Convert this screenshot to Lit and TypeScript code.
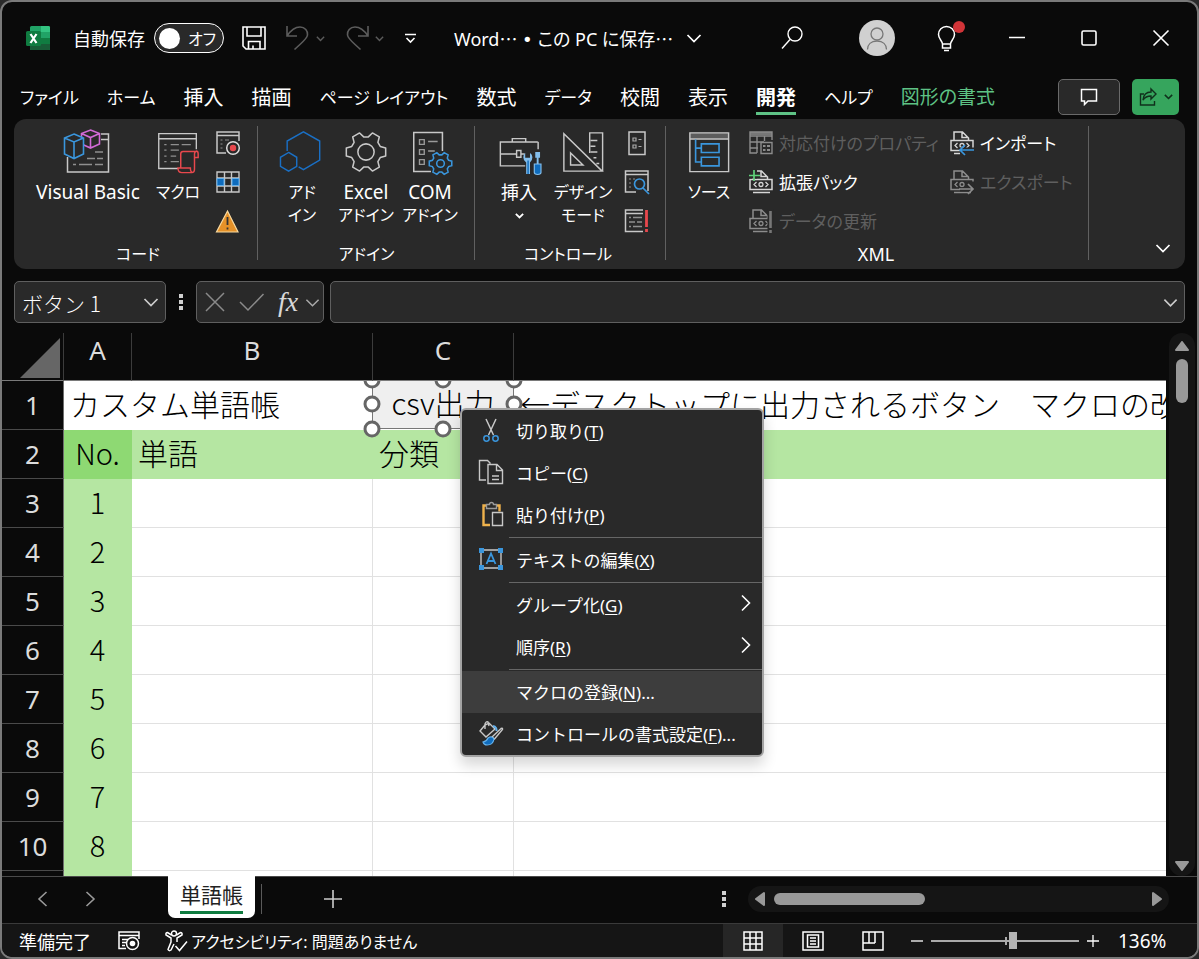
import { LitElement, html, svg, css, nothing } from "lit";
import { customElement, property, state } from "lit/decorators.js";
import { classMap } from "lit/directives/class-map.js";

/** Wraps drawing content in an svg whose viewBox starts at (x, y). */
const icon = (x: number, y: number, w: number, h: number, body: unknown) => html`
  <svg width=${w} height=${h} viewBox="${x} ${y} ${w} ${h}" fill="none" aria-hidden="true">${body}</svg>`;

const chevron = (size: number, color: string, width = 1.6) => html`
  <svg class="chev" width=${size} height=${size} viewBox="0 0 16 16" fill="none" aria-hidden="true">
    <path d="M1.5 5l6.5 6.5L14.5 5" stroke=${color} stroke-width=${(width * 16) / size} />
  </svg>`;

const G = "#c8c8c8";
const B = "#3a96dd";

/* ---------- title bar ---------- */
const logo = icon(26, 26, 24, 24, svg`
  <rect x="30" y="26" width="20" height="24" rx="1.5" fill="#21a366"/>
  <path d="M41 26h7.500a1.500 1.500 0 0 1 1.500 1.500V32h-9z" fill="#33c481"/>
  <path d="M30 32h11v6H30z" fill="#107c41"/><path d="M41 32h9v6h-9z" fill="#21a366"/>
  <path d="M30 38h20v10.500a1.500 1.500 0 0 1-1.500 1.500h-17A1.500 1.500 0 0 1 30 48.500z" fill="#185c37"/>
  <path d="M41 38h9v6h-9z" fill="#107c41"/>
  <rect x="26" y="31" width="15" height="15" rx="1.500" fill="#107c41"/>
  <path d="M30.500 34l6 9M36.500 34l-6 9" stroke="#fff" stroke-width="2.200"/>`);
const save = icon(242, 26, 24, 24, svg`
  <path d="M243 27h22v22h-19l-3-3zM247 27v9h14v-9M248.500 49v-7.500h11.500V49M253 49v-3.500" stroke="#fff" stroke-width="1.600"/>`);
const undo = icon(286, 26, 24, 24, svg`
  <path d="M287 26v10h10M287 36c4-6 8-9 13-9 5 0 8 4 7.500 8-.5 4-5 7-13 14.500" stroke="#5c5c5c" stroke-width="1.600"/>`);
const redo = icon(342, 26, 24, 24, svg`
  <path d="M365 26v10h-10M365 36c-4-6-8-9-13-9-5 0-8 4-7.500 8 .5 4 5 7 13 14.500" stroke="#5c5c5c" stroke-width="1.600"/>`);
const customize = icon(405, 32, 13, 13, svg`
  <path d="M406 34.500h11M407.500 38l4 4 4-4" stroke="#fff" stroke-width="1.600"/>`);
const search = icon(780, 26, 24, 24, svg`
  <circle cx="795" cy="34" r="7" stroke="#fff" stroke-width="1.400"/><path d="M790 39.500l-8 9" stroke="#fff" stroke-width="1.400"/>`);
const person = icon(865, 26, 24, 24, svg`
  <circle cx="877" cy="34" r="6" stroke="#777" stroke-width="1.300"/><path d="M867.500 49.500c0-5 3.500-8.500 9.500-8.500s9.500 3.500 9.500 8.500" stroke="#777" stroke-width="1.300"/>`);
const bulb = icon(934, 20, 32, 34, svg`
  <path d="M942.500 43c0-3-4-5-4-9.500a8 8 0 0 1 16 0c0 4.500-4 6.500-4 9.500zM942.500 43v4h8v-4M944 49.500h5" stroke="#fff" stroke-width="1.500"/>
  <circle cx="959" cy="26" r="6" fill="#d13438"/>`);

/* ---------- ribbon, large ---------- */
const vb = icon(64, 130, 46, 44, svg`
  <path d="M100 134h7.500v38H66.500v-15M100 139.500h7.500" stroke=${G} stroke-width="1.500"/>
  <path d="M94 152h8M86 158.500h8M96 158.500h6M72 164.500h3M78 164.500h13M94 164.500h8" stroke="#8f8f8f" stroke-width="1.500"/>
  <path d="M89.500 130l9 3.500v10.500l-9 4-9-4V133.500zM80.500 133.500l9 4 9-4M89.500 137.500V148" stroke="#d169d6" stroke-width="1.600"/>
  <path d="M73 134l9.500 4v16L73 158.500l-9.500-4.500v-16zM63.500 138l9.500 4 9.500-4M73 142v16.500" fill="#292929" stroke=${B} stroke-width="1.600"/>`);
const macro = icon(153, 130, 48, 48, svg`
  <path d="M197 151v-17h-41v38h21M156 139.500h41" stroke=${G} stroke-width="1.500"/>
  <path d="M162 146h2.500M169 146h9M181 146h10M162 152h2.500M169 152h9M162 158.500h2.500M169 158.500h6M162 164.500h2.500M169 164.500h9" stroke="#8f8f8f" stroke-width="1.500"/>
  <path d="M180 171v-15q0-2.500 2.500-2.500h14.500v0q-2 0-2 3v16q0 4-3 4h-11q-4 0-4-5h13.500q0 5 3 5M195 160h4v-4q0-3-2.500-3" stroke="#e8484d" stroke-width="1.600"/>`);
const hexes = icon(280, 130, 46, 46, svg`
  <path d="M287.500 152v-10.500l17-9.500 17 9.500v20l-17 10-5-3" stroke="#1a6fc4" stroke-width="1.500"/>
  <path d="M289 153.500l8.500 5v9.500l-8.500 5-8.500-5v-9.500z" stroke="#1a6fc4" stroke-width="1.500"/>`);

const gearPath = (cx: number, cy: number, r: number) => {
  const pts: string[] = [];
  for (let i = 0; i < 6; i++) {
    const a = (i * 60 * Math.PI) / 180;
    for (const [d, k] of [[-0.37, 0.76], [-0.2, 1], [0.2, 1], [0.37, 0.76]]) {
      pts.push(`${(cx + Math.cos(a + d) * r * k).toFixed(2)} ${(cy + Math.sin(a + d) * r * k).toFixed(2)}`);
    }
  }
  return `M${pts.join("L")}Z`;
};
const gear = icon(343, 130, 46, 46, svg`
  <path d=${gearPath(366, 153, 21)} stroke=${G} stroke-width="1.600" stroke-linejoin="round"/>
  <circle cx="366" cy="153" r="8.500" stroke=${G} stroke-width="1.600"/>`);
const comGear = icon(409, 130, 46, 46, svg`
  <path d="M445 152v-19.500h-30v41h18" stroke=${G} stroke-width="1.600"/>
  <path d="M421 140h5v5h-5zM421 150.500h5v5h-5zM421 161h5v5h-5zM430 142h10M430 152h7" stroke="#9a9a9a" stroke-width="1.400"/>
  <path d=${gearPath(443, 165, 12)} fill="#292929" stroke=${B} stroke-width="1.600"/>
  <circle cx="443" cy="165" r="4" stroke=${B} stroke-width="1.600"/>`);
const toolbox = icon(494, 130, 46, 46, svg`
  <path d="M537 150v-7q0-0-1-.5h-38.500v25h26M510 142v-3h14v3M497 155h17M519 155h4M514.500 151.500h4.500v7h-4.500z" stroke=${G} stroke-width="1.500"/>
  <path d="M524.500 176v-12q-3-2-3-5.500 0-3 2-4.500v5h5v-5q2.500 1.500 2.500 4.500 0 3.500-2.500 5.500v12z" fill="#83beec"/>
  <path d="M526.500 176v-14" stroke="#0f6cbd" stroke-width="1.500"/>
  <path d="M534 153h5v6h-1.500v7h-2v-7H534z" fill="#83beec"/><path d="M533 165.500h7v9q0 2-3.500 2t-3.500-2z" fill="#0f6cbd" stroke="#83beec" stroke-width="1.200"/>`);
const design = icon(559, 130, 46, 46, svg`
  <path d="M562 134v39h40zM569 154v12.500h13zM589 154v-21h13.500v40M590 141h7M590 147h5M590 153h7M593 159h3M596 165h3" stroke=${G} stroke-width="1.500"/>`);
const source = icon(685, 130, 46, 46, svg`
  <path d="M688 133h40v6h-40z" fill="#5c5c5c"/>
  <path d="M688 133h40.500v40.500H688zM688 139.500h40" stroke=${G} stroke-width="1.500"/>
  <path d="M694 140v23.500h6M694 149h6M700 144.500h18.500v9H700zM700 158.500h18.500v9H700z" stroke=${B} stroke-width="1.700"/>`);

/* ---------- ribbon, small ---------- */
const record = icon(216, 131, 24, 24, svg`
  <path d="M226 153h-9v-21h22v9M217 135.500h22" stroke=${G} stroke-width="1.500"/><path d="M220.500 140h2M225 140h4M220.500 144h2M220.500 148h2" stroke="#8f8f8f"/>
  <circle cx="233" cy="148" r="6.300" stroke="#ddd" stroke-width="1.500"/><circle cx="233" cy="148" r="3.200" fill="#e8484d"/>`);
const relative = icon(216, 170, 24, 24, svg`
  <path d="M217 172h22v20h-22zM217 178h22M217 186h22M224.500 172v20M231.500 172v20" stroke=${G} stroke-width="1.400"/>
  <path d="M217 178.500h7v7h-7zM232 178.500h7v7h-7z" fill="#0f6cbd" stroke="#64b1ec"/>`);
const warning = icon(216, 209, 24, 24, svg`
  <path d="M227.500 211l10.500 21h-21.500z" fill="#e59128" stroke="#f7d9a0" stroke-width="1.200"/><path d="M227.500 217v8M227.500 227.500v2" stroke="#333" stroke-width="1.800"/>`);
const props = icon(623, 131, 24, 24, svg`
  <path d="M627 132h16v22.500h-16z" stroke=${G} stroke-width="1.500"/><path d="M631 138h3v3h-3zM631 145h3v3h-3zM636.500 139.500h3M636.500 146.500h3" stroke="#aaa" stroke-width="1.200"/>`);
const viewCode = icon(623, 170, 24, 24, svg`
  <path d="M634 192h-10.500v-21h22.500v20M624 174.500h22" stroke=${G} stroke-width="1.500"/><path d="M627 179h2M631 179h2M627 183h2M627 187h2" stroke="#8f8f8f"/>
  <circle cx="637.500" cy="184" r="5" stroke=${B} stroke-width="1.700"/><path d="M641 188l6 6" stroke=${B} stroke-width="1.700"/>`);
const runDialog = icon(623, 209, 24, 24, svg`
  <path d="M641 210h-17.500v21.500h17.500M624 213.500h17" stroke=${G} stroke-width="1.500"/><path d="M627 217.500h2M631 217.500h9M627 222h6M635 222h5M627 226.500h2M631 226.500h9" stroke="#8f8f8f" stroke-width="1.300"/>
  <path d="M644.500 210v17M644.500 229v3" stroke="#e8484d" stroke-width="2.800"/>`);
const mapProps = icon(748, 131, 24, 24, svg`
  <path d="M749 132h22v3h-22z" fill="#777"/><path d="M756 153h-7v-21h22v8M749 136h22M749 142h14M749 148h8M756 136v17M763.500 136v5" stroke="#8c8c8c" stroke-width="1.400"/>
  <path d="M760 142.500h11v11h-11z" stroke="#8c8c8c" stroke-width="1.400"/><path d="M762 146h2.500M766 146h3M762 150h2.500M766 150h3" stroke="#8c8c8c" stroke-width="2"/>`);
const xmlDoc = (c: string) => svg`
  <path d="M4 9.500V1h8.500l6 6v2.500M12 1v5.500h6M1 9.500h22v10H1zM4 22.500h17" stroke=${c} stroke-width="1.500"/>
  <path d="M7.500 12L5 14.500 7.500 17M16.500 12l2.500 2.500-2.500 2.500" stroke=${c} stroke-width="1.300"/><circle cx="12" cy="14.500" r="2" stroke=${c} stroke-width="1.300"/>`;
const expansion = icon(0, 0, 24, 24, svg`${xmlDoc("#d6d6d6")}<path d="M-1 -1h9v9.500h-9z" fill="#292929"/><path d="M5 0v11M0 5.500h11" stroke="#5fd17a" stroke-width="1.700"/>`);
const refresh = icon(0, 0, 24, 24, svg`${xmlDoc("#8c8c8c")}<path d="M18.500 0h6v24h-6z" fill="#292929"/><path d="M21.500 2v17M21.500 21v3" stroke="#777" stroke-width="2.600"/>`);
const importIcon = icon(0, 0, 24, 24, svg`${xmlDoc("#d6d6d6")}<path d="M10 16.500h15v8H10z" fill="#292929"/><path d="M24 19H10.500M15 14l-5 5 5 5" stroke=${B} stroke-width="1.700"/>`);
const exportIcon = icon(0, 0, 24, 24, svg`${xmlDoc("#8c8c8c")}<path d="M15 11.500h9.500v10H10v-4h5z" fill="#292929"/><path d="M9 19h14M18 14l5 5-5 5" stroke="#8c8c8c" stroke-width="1.700"/>`);

/* ---------- context menu ---------- */
const cut = icon(479, 418, 24, 24, svg`
  <path d="M486 419l7.500 16M496 419l-7.500 16" stroke=${G} stroke-width="1.500"/>
  <circle cx="486.500" cy="438.500" r="2.700" stroke=${B} stroke-width="1.500"/><circle cx="495.500" cy="438.500" r="2.700" stroke=${B} stroke-width="1.500"/>`);
const copy = icon(479, 460, 24, 24, svg`
  <path d="M486 480h-6.500v-19.500h8l3 3M488 464.500h9l5.500 5.500v13.500H488zM496.500 465v5.500h6M492 476h7M492 479.500h7" stroke=${G} stroke-width="1.400"/>`);
const paste = icon(479, 502, 24, 24, svg`
  <path d="M490 525h-6.500v-19.500h16v6" stroke="#efb24c" stroke-width="2.400"/>
  <path d="M486.500 508.500v-4h3q0-2 2-2t2 2h3v4z" fill="#292929" stroke="#9a9a9a" stroke-width="1.400"/><path d="M492.500 512.500h10v13h-10z" fill="#292929" stroke=${G} stroke-width="1.400"/>`);
const editText = icon(479, 547, 24, 24, svg`
  <path d="M481 550h20v18h-20z" stroke=${G} stroke-width="1.400"/><path d="M479 548h5v5h-5zM498 548h5v5h-5zM479 565h5v5h-5zM498 565h5v5h-5z" fill=${B}/>
  <path d="M486.500 564l4.500-10.500 4.500 10.500M488 561h6" stroke=${B} stroke-width="1.800"/>`);
const format = icon(479, 721, 24, 24, svg`
  <path d="M485 725l-5 6 6 6 9-8-6-6zM485 729v-5q1-3 3-2l1 4" stroke=${G} stroke-width="1.400"/>
  <path d="M493 726q4 1 3.500 5" stroke="#64b1ec" stroke-width="2"/>
  <path d="M492 737l9-8.500q2-1 1.500 1l-8 9.500z" stroke=${G} stroke-width="1.400" fill="#292929"/>
  <path d="M483 742q4-1 5-4 4-2.500 6 1-1 6-7 6-3 0-4-3z" fill="#0f6cbd" stroke="#64b1ec" stroke-width="1.200"/>`);

type SmallCommand = { label: string; icon: unknown; disabled?: boolean };

const TABS = [
  ["ファイル", "kana"], ["ホーム", "kana"], ["挿入", ""], ["描画", ""], ["ページ レイアウト", "kana"], ["数式", ""],
  ["データ", "kana"], ["校閲", ""], ["表示", ""], ["開発", "active"], ["ヘルプ", "kana"], ["図形の書式", "context"],
];

@customElement("xl-titlebar")
class XlTitlebar extends LitElement {
  @state() private autosave = false;
  static styles = css`
    :host { display: flex; align-items: center; height: 72px; padding-left: 24px; color: #fff; font-size: 18px; }
    * { box-sizing: border-box; }
    svg { display: block; flex: none; overflow: visible; }
    button { appearance: none; border: 0; padding: 0; background: none; color: inherit; font: inherit; display: flex; align-items: center; justify-content: center; flex: none; }
    .caption { margin-left: 23px; font-size: 18px; white-space: nowrap; }
    .switch { position: relative; display: flex; align-items: center; gap: 8px; height: 30px; width: 70px; margin-left: 9px; padding-left: 4px; border: 1px solid #fff; border-radius: 15px; background: #292929; font-size: 16px; flex: none; }
    .switch input { position: absolute; inset: 0; opacity: 0; margin: 0; }
    .knob { width: 21px; height: 21px; border-radius: 50%; background: #fff; }
    .save { margin-left: 18px; }
    .undo { margin-left: 20px; gap: 6px; }
    .customize { margin-left: 20px; }
    .doc { margin-left: 37px; gap: 13px; white-space: nowrap; }
    .cjk { font-family: "Noto Sans CJK JP", sans-serif; }
    .bullet { font-family: "DejaVu Sans", sans-serif; }
    .right { margin-left: auto; display: flex; align-items: center; }
    .avatar { width: 36px; height: 36px; margin: 0 39px 0 55px; border-radius: 50%; background: #d0d0d0; }
    .win { width: 72px; height: 48px; }
    .tips { margin-right: 15px; }
  `;
  render() {
    return html`
      ${logo}
      <span class="caption" id="autosave">自動保存</span>
      <label class="switch">
        <input type="checkbox" role="switch" aria-labelledby="autosave" .checked=${this.autosave}
          @change=${() => (this.autosave = !this.autosave)} />
        <span class="knob"></span><span>${this.autosave ? "オン" : "オフ"}</span>
      </label>
      <button class="save" aria-label="上書き保存">${save}</button>
      <button class="undo" aria-label="元に戻す">${undo}${chevron(9, "#5c5c5c", 1.4)}</button>
      <button class="undo" aria-label="やり直し">${redo}${chevron(9, "#5c5c5c", 1.4)}</button>
      <button class="customize" aria-label="クイック アクセス ツール バーのユーザー設定">${customize}</button>
      <button class="doc"><span>Word<span class="cjk">…</span> <span class="bullet">•</span> この PC に保存<span class="cjk">…</span></span>${chevron(16, "#fff", 1.7)}</button>
      <div class="right">
        <button aria-label="検索">${search}</button>
        <button class="avatar" aria-label="アカウント">${person}</button>
        <button class="tips" aria-label="ヒント">${bulb}</button>
        <button class="win" aria-label="最小化">${icon(0, 0, 16, 16, svg`<path d="M0 7.500h16" stroke="#fff" stroke-width="1.500"/>`)}</button>
        <button class="win" aria-label="最大化">${icon(0, 0, 16, 16, svg`<rect x="1" y="1" width="14" height="14" rx="1.500" stroke="#fff" stroke-width="1.600"/>`)}</button>
        <button class="win" aria-label="閉じる">${icon(0, 0, 16, 16, svg`<path d="M.5.500l15 15M15.500.500l-15 15" stroke="#fff" stroke-width="1.600"/>`)}</button>
      </div>`;
  }
}

@customElement("xl-ribbon")
class XlRibbon extends LitElement {
  static styles = css`
    :host { display: block; color: #fff; font-size: 18px; }
    * { box-sizing: border-box; }
    svg { display: block; flex: none; overflow: visible; }
    button { appearance: none; border: 0; padding: 0; margin: 0; background: none; color: inherit; font: inherit; }
    .tabs { display: flex; align-items: center; gap: 28px; height: 45px; padding: 0 18px; }
    .tab { position: relative; height: 36px; padding-bottom: 1px; font-size: 20px; white-space: nowrap; }
    .tab.kana { font-size: 17px; }
    .tab.active { font-weight: 700; border-bottom: 3px solid #5ec285; border-top: 3px solid transparent; }
    .tab.context { color: #5ec285; font-size: 19px; }
    .end { display: flex; gap: 12px; margin-left: auto; }
    .comment, .share { display: flex; align-items: center; justify-content: center; height: 36px; border-radius: 5px; }
    .comment { width: 62px; border: 1px solid #6a6a6a; background: #292929; }
    .share { width: 47px; gap: 7px; background: #36a55d; }
    .ribbon { display: flex; height: 150px; margin: 0 12px; padding-top: 4px; border-radius: 12px; background: #292929; }
    .group { position: relative; display: flex; flex-direction: column; margin: 0; flex: none; }
    .group::after { content: ""; position: absolute; right: 0; top: 3px; bottom: 9px; width: 1px; background: #606060; }
    .code { padding: 0 18px 0 22px; }
    .code .row { gap: 14px; }
    .addin { padding: 0 12px; }
    .addin .row { padding-right: 1px; }
    .control { padding: 0 17px 0 12px; }
    .control .small { margin-left: 10px; }
    .xml { padding: 0 24px 0 11px; }
    .row { display: flex; height: 117px; }
    .name { height: 29px; line-height: 28px; text-align: center; font-size: 16px; }
    .xml .name { font-size: 18px; padding-left: 10px; }
    .large { display: flex; flex-direction: column; align-items: center; width: 64px; padding-top: 7px; line-height: 23px; font-size: 18px; white-space: nowrap; }
    .large svg:first-child { height: 44px; margin-bottom: 7px; }
    .large .kana { font-size: 16px; }
    .large .latin { font-size: 19px; }
    .large .chev { margin-top: 7px; }
    .wide { width: 104px; }
    .mid { width: 48px; }
    .small { display: grid; grid-template-rows: repeat(3, 39px); align-items: center; }
    .small button { height: 24px; }
    .xmlgrid { display: grid; grid-template-columns: 201px 115px; grid-template-rows: repeat(3, 39px); align-items: center; margin-left: 8px; }
    .cmd { display: flex; align-items: center; gap: 6px; font-size: 17px; white-space: nowrap; }
    .cmd:disabled { color: #5f5f5f; }
    .collapse { margin: auto 14px 13px auto; }
  `;
  private cmd(c: SmallCommand) {
    return html`<button class="cmd" ?disabled=${c.disabled}>${c.icon}<span>${c.label}</span></button>`;
  }
  render() {
    return html`
      <nav class="tabs">
        ${TABS.map(([label, kind]) => html`<button class="tab ${kind}">${label}</button>`)}
        <div class="end">
          <button class="comment" aria-label="コメント">${icon(0, 0, 18, 18, svg`<path d="M1.500 1.500h15v11.500H8l-3.500 3.500V13h-3z" stroke="#fff" stroke-width="1.500"/>`)}</button>
          <button class="share" aria-label="共有">
            ${icon(0, 0, 18, 18, svg`<path d="M5 6H1.500v11h14v-4M12 1l5 5-5 5V8c-4 0-6 1-8 4 .5-5 3-8 8-8z" stroke="#10301c" stroke-width="1.400"/>`)}
            ${chevron(9, "#10301c", 1.6)}
          </button>
        </div>
      </nav>
      <div class="ribbon">
        <section class="group code">
          <div class="row">
            <button class="large wide">${vb}<span class="latin">Visual Basic</span></button>
            <button class="large mid">${macro}<span class="kana">マクロ</span></button>
            <div class="small">
              <button aria-label="マクロの記録">${record}</button>
              <button aria-label="相対参照で記録">${relative}</button>
              <button aria-label="マクロのセキュリティ">${warning}</button>
            </div>
          </div>
          <div class="name">コード</div>
        </section>
        <section class="group addin">
          <div class="row">
            <button class="large">${hexes}<span class="kana">アド</span><span class="kana">イン</span></button>
            <button class="large">${gear}<span class="latin">Excel</span><span class="kana">アドイン</span></button>
            <button class="large">${comGear}<span class="latin">COM</span><span class="kana">アドイン</span></button>
          </div>
          <div class="name">アドイン</div>
        </section>
        <section class="group control">
          <div class="row">
            <button class="large">${toolbox}<span>挿入</span>${chevron(9, "#fff", 1.8)}</button>
            <button class="large">${design}<span class="kana">デザイン</span><span class="kana">モード</span></button>
            <div class="small">
              <button aria-label="プロパティ">${props}</button>
              <button aria-label="コードの表示">${viewCode}</button>
              <button aria-label="ダイアログの実行">${runDialog}</button>
            </div>
          </div>
          <div class="name">コントロール</div>
        </section>
        <section class="group xml">
          <div class="row">
            <button class="large">${source}<span class="kana">ソース</span></button>
            <div class="xmlgrid">
              ${this.cmd({ label: "対応付けのプロパティ", icon: mapProps, disabled: true })}
              ${this.cmd({ label: "インポート", icon: importIcon })}
              ${this.cmd({ label: "拡張パック", icon: expansion })}
              ${this.cmd({ label: "エクスポート", icon: exportIcon, disabled: true })}
              ${this.cmd({ label: "データの更新", icon: refresh, disabled: true })}
            </div>
          </div>
          <div class="name">XML</div>
        </section>
        <button class="collapse" aria-label="リボンの表示オプション">${chevron(16, "#fff", 1.7)}</button>
      </div>`;
  }
}

@customElement("xl-formula-bar")
class XlFormulaBar extends LitElement {
  static styles = css`
    :host { display: flex; height: 42px; margin: 12px 12px 10px; color: #e6e6e6; }
    * { box-sizing: border-box; }
    svg { display: block; flex: none; overflow: visible; }
    button { appearance: none; border: 0; padding: 0; background: none; color: inherit; }
    .box { display: flex; align-items: center; border: 1px solid #5f5f5f; border-radius: 5px; background: #292929; }
    input { min-width: 0; flex: 1; border: 0; outline: 0; background: none; color: #fff; font: 300 21px "Noto Sans CJK JP", sans-serif; font-feature-settings: normal; padding: 2px 0 0 7px; }
    .name { width: 152px; padding-right: 6px; }
    .dots { width: 30px; display: flex; justify-content: center; align-items: center; }
    .fx { width: 128px; padding: 0 2px 0 9px; gap: 16px; }
    .fn { display: flex; align-items: center; gap: 7px; margin-left: -2px; font: italic 400 28px/32px "Liberation Serif", serif; color: #d8d8d8; }
    .text { flex: 1; margin-left: 6px; padding-right: 6px; }
  `;
  render() {
    return html`
      <div class="box name"><input aria-label="名前ボックス" .value=${"ボタン 1"} /><button aria-label="名前の一覧">${chevron(16, "#ccc", 1.7)}</button></div>
      <div class="dots">${icon(0, 0, 4, 16, svg`<path d="M0 0h4v4H0zM0 6h4v4H0zM0 12h4v4H0z" fill="#d0d0d0"/>`)}</div>
      <div class="box fx">
        <button aria-label="キャンセル">${icon(0, 0, 18, 18, svg`<path d="M0 0l18 18M18 0L0 18" stroke="#8a8a8a" stroke-width="1.500"/>`)}</button>
        <button aria-label="入力">${icon(0, 0, 24, 18, svg`<path d="M0 9l8 8L23.500 1" stroke="#8a8a8a" stroke-width="1.500"/>`)}</button>
        <button class="fn" aria-label="関数の挿入"><span>fx</span>${chevron(15, "#aaa", 1.5)}</button>
      </div>
      <div class="box text"><input aria-label="数式バー" /><button aria-label="数式バーの展開">${chevron(15, "#ccc", 1.6)}</button></div>`;
  }
}

type MenuEntry = "-" | { text: string; key: string; tail?: string; icon?: unknown; sub?: boolean; hover?: boolean };

@customElement("xl-context-menu")
class XlContextMenu extends LitElement {
  @property({ attribute: false }) entries: MenuEntry[] = [
    { text: "切り取り", key: "T", icon: cut },
    { text: "コピー", key: "C", icon: copy },
    { text: "貼り付け", key: "P", icon: paste },
    "-",
    { text: "テキストの編集", key: "X", icon: editText },
    "-",
    { text: "グループ化", key: "G", sub: true },
    { text: "順序", key: "R", sub: true },
    "-",
    { text: "マクロの登録", key: "N", tail: "...", hover: true },
    { text: "コントロールの書式設定", key: "F", tail: "...", icon: format },
  ];
  static styles = css`
    :host { display: block; }
    * { box-sizing: border-box; }
    .menu { width: 304px; border: 2px solid #a3a3a3; border-radius: 6px; background: #292929; overflow: hidden; box-shadow: 0 8px 14px rgba(0, 0, 0, 0.16); }
    button { appearance: none; border: 0; margin: 0; background: none; color: #fff; font: inherit; font-size: 17px; display: flex; align-items: center; width: 100%; height: 42px; padding: 0 11px 2px 17px; text-align: left; white-space: nowrap; }
    .hover { background: #3d3d3d; }
    .ico { width: 24px; height: 24px; margin-right: 13px; flex: none; }
    .label { flex: 1; }
    svg { display: block; overflow: visible; }
    hr { height: 1px; margin: 1px 0 1px 47px; border: 0; background: #666; }
    u { text-underline-offset: 2px; text-decoration-thickness: 1px; }
  `;
  render() {
    return html`<div class="menu" role="menu">
      ${this.entries.map((e) => e === "-" ? html`<hr />` : html`
        <button role="menuitem" class=${classMap({ hover: !!e.hover })}>
          <span class="ico">${e.icon ?? nothing}</span>
          <span class="label">${e.text}(<u>${e.key}</u>)${e.tail ?? ""}</span>
          ${e.sub ? icon(0, 0, 10, 20, svg`<path d="M1 1.500l7.500 7.500L1 16.500" stroke="#fff" stroke-width="1.600"/>`) : nothing}
        </button>`)}
    </div>`;
  }
}

@customElement("xl-sheet")
class XlSheet extends LitElement {
  private rows = Array.from({ length: 9 }, (_, i) => i + 3);
  static styles = css`
    :host { display: flex; flex: 1; min-height: 0; }
    * { box-sizing: border-box; }
    .view { position: relative; flex: 1; min-width: 0; background: #fff; }
    .clip { height: 100%; overflow: hidden; }
    table { width: 100%; table-layout: fixed; border-collapse: separate; border-spacing: 0; color: #000; }
    .c0 { width: 62px; } .ca { width: 68px; } .cb { width: 241px; } .cc { width: 141px; }
    th, td { padding: 0; height: 49px; white-space: nowrap; vertical-align: top; }
    th { background: #0a0a0a; color: #dcdcdc; font: 400 26px/48px "Noto Sans", sans-serif; }
    thead th { height: 48px; border-bottom: 1px solid #7a7a7a; border-right: 1px solid #3c3c3c; line-height: 34px; }
    thead th:last-child { border-right: 0; }
    thead th svg { display: block; margin: 5px 0 0 18px; }
    tbody th { border-bottom: 1px solid #4a4a4a; border-right: 1px solid #6e6e6e; }
    td { border-right: 1px solid #e1e1e1; border-bottom: 1px solid #e1e1e1; padding-left: 6px; font: 300 30px/44px "Noto Sans CJK JP", sans-serif; }
    td:last-child { border-right: 0; }
    .first td { border-color: #fff; }
    .first td:last-child { overflow: hidden; }
    .head td { background: #b5e6a2; border-color: #b5e6a2; }
    .head td.no { background: #8ed973; border-color: #8ed973; }
    td.no { background: #b5e6a2; border-color: #b5e6a2; text-align: center; padding: 0; font-size: 29px; }
    .objects { position: absolute; inset: 48px 0 0 0; overflow: hidden; pointer-events: none; }
    .control { position: absolute; left: 370px; top: -1px; width: 142px; height: 49px; padding: 0 0 5px; border: 1px solid #777; border-top: 0; background: #efefef; color: #000; font: 300 30px "Noto Sans CJK JP", sans-serif; }
    .handles { position: absolute; left: 359px; top: -13px; }
    xl-context-menu { position: absolute; left: 458px; top: 75px; }
    .vscroll { display: flex; flex-direction: column; align-items: center; width: 26px; margin: 0 2px 0 3px; padding: 8px 0 5px; border-radius: 13px; background: #151515; }
    .thumb { width: 12px; height: 44px; margin-top: 8px; border-radius: 6px; background: #999; }
    .vscroll svg:last-child { margin-top: auto; }
  `;
  render() {
    const pts = [[371, 0], [442, 0], [513, 0], [371, 24], [513, 24], [371, 49], [442, 49], [513, 49]];
    return html`
      <div class="view">
        <div class="clip">
          <table>
            <colgroup><col class="c0" /><col class="ca" /><col class="cb" /><col class="cc" /><col /></colgroup>
            <thead>
              <tr>
                <th>${icon(0, 0, 40, 40, svg`<path d="M40 0v40H0z" fill="#666"/>`)}</th>
                <th>A</th><th>B</th><th>C</th><th></th>
              </tr>
            </thead>
            <tbody>
              <tr class="first"><th>1</th><td colspan="2">カスタム単語帳</td><td></td><td>←デスクトップに出力されるボタン　マクロの改</td></tr>
              <tr class="head"><th>2</th><td class="no">No.</td><td>単語</td><td>分類</td><td></td></tr>
              ${this.rows.map((n) => html`<tr><th>${n < 11 ? n : ""}</th><td class="no">${n < 11 ? n - 2 : ""}</td><td></td><td></td><td></td></tr>`)}
            </tbody>
          </table>
        </div>
        <div class="objects">
          <button class="control">csv出力</button>
          <svg class="handles" width="164" height="74" viewBox="360 -12 164 74" aria-hidden="true">
            ${pts.map(([x, y]) => svg`<circle cx=${x} cy=${y} r="7" fill="#fff" stroke="#666" stroke-width="3"/>`)}
          </svg>
        </div>
        <xl-context-menu></xl-context-menu>
      </div>
      <div class="vscroll">
        ${icon(0, 0, 14, 10, svg`<path d="M7 1l6 8H1z" fill="#999" stroke="#999" stroke-width="2" stroke-linejoin="round"/>`)}
        <div class="thumb"></div>
        ${icon(0, 0, 14, 10, svg`<path d="M7 9l6-8H1z" fill="#999" stroke="#999" stroke-width="2" stroke-linejoin="round"/>`)}
      </div>`;
  }
}

@customElement("xl-footer")
class XlFooter extends LitElement {
  static styles = css`
    :host { display: block; color: #fff; font-size: 18px; }
    * { box-sizing: border-box; }
    svg { display: block; flex: none; overflow: visible; }
    button { appearance: none; border: 0; padding: 0; background: none; color: inherit; font: inherit; display: flex; align-items: center; justify-content: center; flex: none; }
    .sheets { display: flex; align-items: center; height: 48px; padding-bottom: 2px; border-top: 1px solid #4a4a4a; border-bottom: 1px solid #3a3a3a; }
    .nav { width: 48px; height: 44px; }
    .nav:first-child { margin-left: 16px; }
    .sheet { position: relative; align-self: flex-start; height: 42px; margin: -1px 6px 0 54px; padding: 0 12px; border-radius: 0 0 7px 7px; background: #fff; color: #222; font: 400 21px/29px "Noto Sans CJK JP", sans-serif; }
    .sheet span { display: block; height: 34px; border-bottom: 3px solid #107c41; }
    .line { width: 1px; height: 30px; background: #5a5a5a; }
    .add { margin-left: 62px; }
    .dots { margin-left: auto; }
    .hscroll { display: flex; align-items: center; width: 421px; height: 26px; margin: 0 28px 0 22px; padding: 0 7px; border-radius: 13px; background: #151515; }
    .thumb { width: 151px; height: 12px; margin-left: 9px; margin-right: auto; border-radius: 6px; background: #999; }
    .status { display: flex; align-items: center; height: 33px; padding-left: 17px; background: #151515; white-space: nowrap; }
    .rec { margin-left: 27px; }
    .acc { margin-left: 25px; gap: 4px; font-size: 16px; }
    .views { display: flex; margin-left: auto; }
    .view { width: 60px; height: 33px; }
    .on { background: #262626; }
    .step { width: 12px; height: 20px; margin-left: 8px; }
    .zoom { appearance: none; width: 148px; height: 18px; margin: 0 0 0 8px; background: linear-gradient(#aaa, #aaa) 0 8px / 100% 2px no-repeat, linear-gradient(#aaa, #aaa) 74px 5px / 2px 8px no-repeat; }
    .zoom::-webkit-slider-thumb { appearance: none; width: 8px; height: 17px; background: #b4b4b4; }
    .pct { width: 98px; padding-left: 19px; justify-content: flex-start; font-size: 19px; }
  `;
  render() {
    const w = "#fff";
    return html`
      <div class="sheets">
        <button class="nav" aria-label="前のシート">${icon(0, 0, 9, 16, svg`<path d="M8.500 1L1 8l7.500 7" stroke="#999" stroke-width="1.600"/>`)}</button>
        <button class="nav" aria-label="次のシート">${icon(0, 0, 9, 16, svg`<path d="M.5 1L8 8 .5 15" stroke="#999" stroke-width="1.600"/>`)}</button>
        <button class="sheet"><span>単語帳</span></button>
        <div class="line"></div>
        <button class="add" aria-label="新しいシート">${icon(0, 0, 18, 18, svg`<path d="M9 0v18M0 9h18" stroke="#ccc" stroke-width="1.600"/>`)}</button>
        <div class="dots">${icon(0, 0, 4, 16, svg`<path d="M0 0h4v4H0zM0 6h4v4H0zM0 12h4v4H0z" fill="#d0d0d0"/>`)}</div>
        <div class="hscroll">
          ${icon(0, 0, 10, 14, svg`<path d="M1 7l8-6v12z" fill="#999" stroke="#999" stroke-width="2" stroke-linejoin="round"/>`)}
          <div class="thumb"></div>
          ${icon(0, 0, 10, 14, svg`<path d="M9 7L1 1v12z" fill="#999" stroke="#999" stroke-width="2" stroke-linejoin="round"/>`)}
        </div>
      </div>
      <div class="status">
        <span>準備完了</span>
        <button class="rec" aria-label="マクロの記録">${icon(0, 0, 22, 20, svg`
          <path d="M8 17.500H1V1h20v7M1 4.500h20M4 8.500h6M4 11.500h4M4 14.500h3" stroke=${w} stroke-width="1.500"/><circle cx="14.500" cy="12.500" r="6" stroke=${w} stroke-width="1.500"/><circle cx="14.500" cy="12.500" r="2.800" fill=${w}/>`)}</button>
        <button class="acc">${icon(0, 0, 22, 22, svg`
          <circle cx="9" cy="3.500" r="2.500" stroke=${w} stroke-width="1.400"/>
          <path d="M6.500 5L2.500 2.500Q.5 2.500 1 5l5 3v4l-3 7.500q1 2 3 .5L9 14M11.500 5l4-2.500q2 0 1.500 2.500l-5 3v4M10.500 16l4 4.500 7.500-9" stroke=${w} stroke-width="1.500"/>`)}
          <span>アクセシビリティ: 問題ありません</span></button>
        <div class="views">
          <button class="view on" aria-label="標準">${icon(0, 0, 20, 20, svg`<path d="M1 1h18v18H1zM7 1v18M13 1v18M1 7h18M1 13h18" stroke=${w} stroke-width="1.500"/>`)}</button>
          <button class="view" aria-label="ページ レイアウト">${icon(0, 0, 22, 20, svg`<path d="M1 1h20v18H1zM5.500 4h11v12h-11zM8 7h6M8 10h6M8 13h6" stroke=${w} stroke-width="1.500"/>`)}</button>
          <button class="view" aria-label="改ページ プレビュー">${icon(0, 0, 22, 20, svg`<path d="M1 1h20v18H1zM7 1v11M13 1v11M1 12h12" stroke=${w} stroke-width="1.500"/>`)}</button>
        </div>
        <button class="step" aria-label="縮小">${icon(0, 0, 12, 12, svg`<path d="M0 6h12" stroke=${w} stroke-width="1.300"/>`)}</button>
        <input class="zoom" type="range" min="0" max="100" value="56" aria-label="ズーム" />
        <button class="step" aria-label="拡大">${icon(0, 0, 12, 12, svg`<path d="M0 6h12M6 0v12" stroke=${w} stroke-width="1.300"/>`)}</button>
        <button class="pct">136%</button>
      </div>`;
  }
}

@customElement("app-root")
class AppRoot extends LitElement {
  static styles = css`
    :host { display: block; height: 100vh; background: #2a2a2a; font-family: "Noto Sans", "Noto Sans CJK JP", sans-serif; font-feature-settings: "palt"; }
    .window { box-sizing: border-box; display: flex; flex-direction: column; height: 100%; border: 2px solid #7a7a7a; border-radius: 12px; background: #0a0a0a; overflow: hidden; }
    xl-sheet { font-feature-settings: normal; }
  `;
  render() {
    return html`<main class="window" lang="ja">
      <xl-titlebar></xl-titlebar>
      <xl-ribbon></xl-ribbon>
      <xl-formula-bar></xl-formula-bar>
      <xl-sheet></xl-sheet>
      <xl-footer></xl-footer>
    </main>`;
  }
}
